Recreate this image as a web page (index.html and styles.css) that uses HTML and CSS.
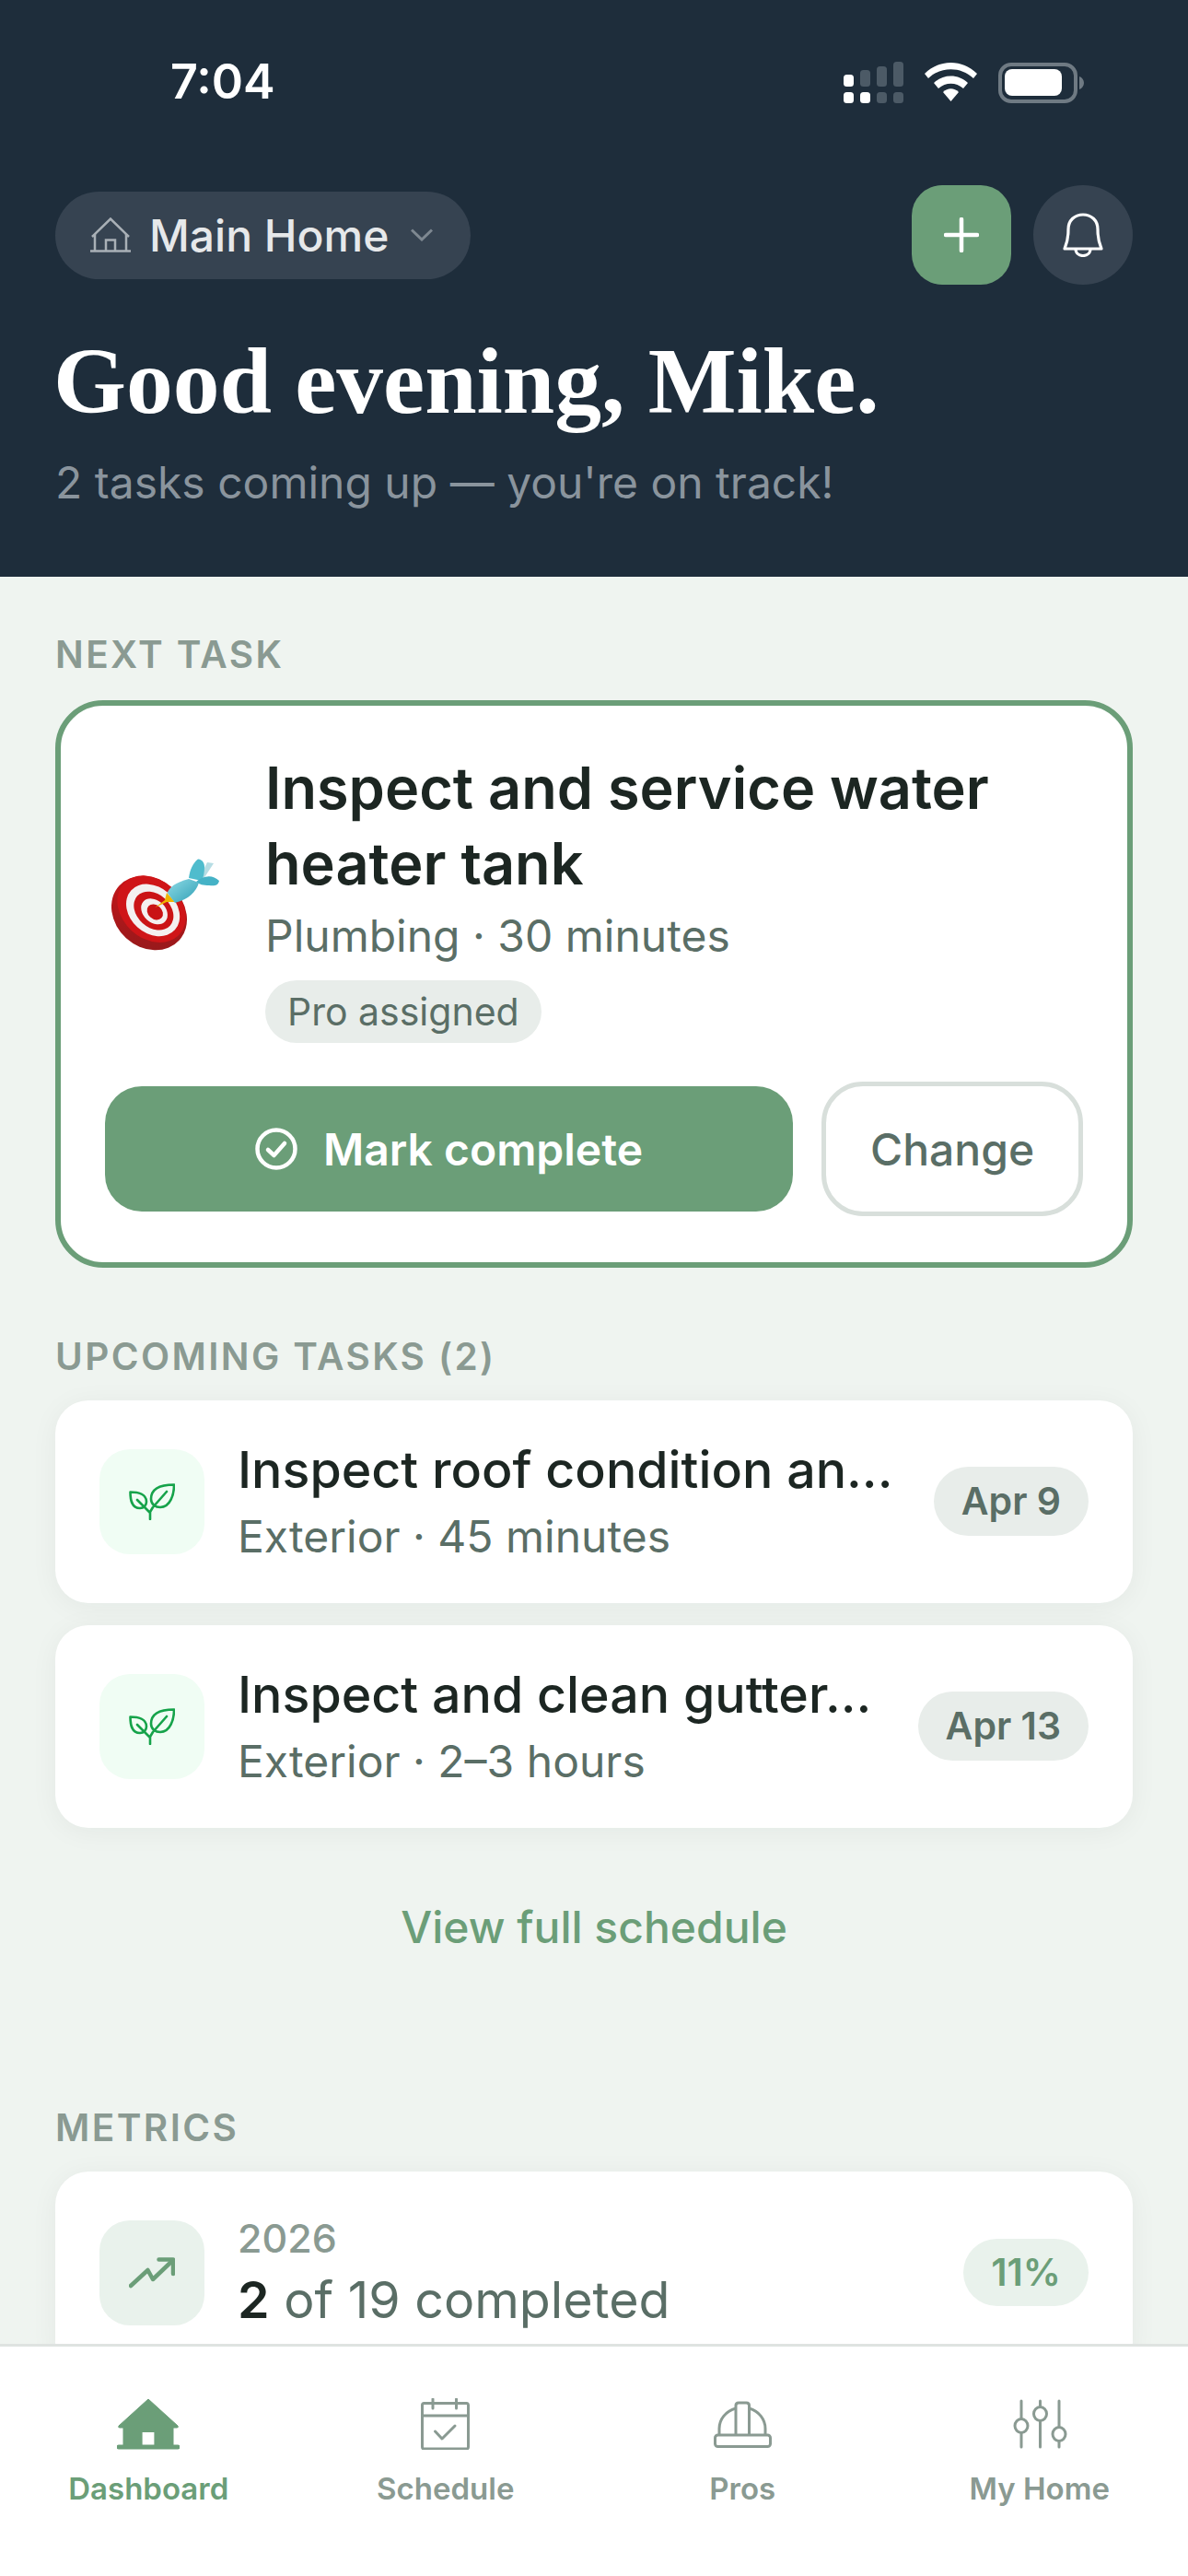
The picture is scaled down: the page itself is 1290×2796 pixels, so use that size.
FILE: index.html
```html
<!DOCTYPE html>
<html lang="en">
<head>
    <meta charset="UTF-8">
    <meta name="viewport" content="width=device-width, initial-scale=1.0">
    <title>Dashboard</title>
    <link rel="stylesheet" href="styles.css">
</head>
<body>
    <header class="hero">
        <div class="status-bar">
            <span class="status-time">7:04</span>
            <svg class="status-icons" width="261" height="45" viewBox="0 0 261 45">
                <!-- signal -->
                <g fill="#4c5a66">
                    <rect x="18" y="9" width="11" height="18" rx="3.5"/>
                    <rect x="36" y="5" width="11" height="22" rx="3.5"/>
                    <rect x="54" y="0" width="11" height="27" rx="3.5"/>
                    <rect x="36" y="33" width="11" height="12" rx="3.5"/>
                    <rect x="54" y="33" width="11" height="12" rx="3.5"/>
                </g>
                <g fill="#fff">
                    <rect x="0" y="14" width="11" height="13" rx="3.5"/>
                    <rect x="0" y="33" width="11" height="12" rx="3.5"/>
                    <rect x="18" y="33" width="11" height="12" rx="3.5"/>
                    <!-- wifi -->
                    <path d="M88 13 C104 -3 129 -3 145 13 L141 18 C127 5 106 5 92 18 Z"/>
                    <path d="M98 23 C108 13 125 13 135 23 L130 29 C122 22 111 22 103 29 Z"/>
                    <path d="M108 33 C113 28 120 28 125 33 L116.5 43 Z"/>
                </g>
                <!-- battery -->
                <rect x="170" y="3" width="82" height="40" rx="12" fill="none" stroke="#6f7a83" stroke-width="4"/>
                <rect x="175" y="8" width="62" height="29" rx="8" fill="#fff"/>
                <path d="M256 16 C259 17 261 20 261 23 C261 26 259 29 256 30 Z" fill="#6f7a83"/>
            </svg>
        </div>

        <div class="hero-top">
            <div class="home-select">
                <svg width="44" height="38" viewBox="0 0 44 38" fill="none" stroke="#a9b0b6" stroke-width="2.5">
                    <path d="M2 21 L22 1.5 L42 21"/>
                    <path d="M5 18 V36.5 M39 18 V36.5 M0 36.5 H44"/>
                    <path d="M17 36.5 V24.5 H27 V36.5"/>
                </svg>
                <span class="home-name">Main Home</span>
                <svg width="24" height="14" viewBox="0 0 24 14" fill="none" stroke="#7e8891" stroke-width="3">
                    <path d="M1 1.5 L12 12 L23 1.5"/>
                </svg>
            </div>
            <div class="hero-actions">
                <button class="add-btn">
                    <svg width="38" height="38" viewBox="0 0 38 38" stroke="#fff" stroke-width="4.5" stroke-linecap="round">
                        <path d="M19 2 V36 M2 19 H36"/>
                    </svg>
                </button>
                <button class="bell-btn">
                    <svg width="44" height="48" viewBox="0 0 44 48" fill="none" stroke="#fff" stroke-width="3.2" stroke-linejoin="round">
                        <path d="M2 39 C2 37 6 33 6 18 C6 8 13 2 22 2 C31 2 38 8 38 18 C38 33 42 37 42 39 Z"/>
                        <path d="M14 39 C14 44 18 46.5 22 46.5 C26 46.5 30 44 30 39"/>
                    </svg>
                </button>
            </div>
        </div>

        <h1 class="greeting">Good evening, Mike.</h1>
        <p class="hero-sub">2 tasks coming up — you're on track!</p>
    </header>

    <main class="content">
        <h2 class="section-label">NEXT TASK</h2>
        <section class="next-card">
            <div class="next-top">
                <!-- dart emoji -->
                <svg class="dart" width="118" height="100" viewBox="0 0 118 100">
                    <defs>
                        <linearGradient id="dartBody" x1="0" y1="0" x2="1" y2="1">
                            <stop offset="0" stop-color="#8fdbe6"/>
                            <stop offset="1" stop-color="#2f9fb5"/>
                        </linearGradient>
                        <linearGradient id="boardSide" x1="0" y1="0" x2="1" y2="1">
                            <stop offset="0" stop-color="#d01518"/>
                            <stop offset="1" stop-color="#8f1a1c"/>
                        </linearGradient>
                    </defs>
                    <g transform="rotate(42 41 59)">
                        <ellipse cx="41" cy="59" rx="44" ry="37" fill="url(#boardSide)"/>
                        <g transform="translate(-1 -5)">
                            <ellipse cx="41" cy="59" rx="41" ry="32" fill="#cf1518"/>
                            <ellipse cx="43" cy="59" rx="32" ry="25" fill="#f4f0f0"/>
                            <ellipse cx="44" cy="59" rx="24" ry="18" fill="#cb1416"/>
                            <ellipse cx="45" cy="59" rx="16" ry="12" fill="#f4f0f0"/>
                            <ellipse cx="46" cy="59" rx="9.5" ry="7.5" fill="#c91315"/>
                        </g>
                    </g>
                    <path d="M104 4 L111 5 L100 22 L96 20 Z" fill="#b6dde4"/>
                    <path d="M84 21 C85 12 89 4 94 0.5 C99 1 101 5 101 9 C101 15 100 20 98 24 Z" fill="#4fbccd"/>
                    <path d="M92 25 C100 18 110 17 117 24 C116 29 112 30 106 29 C100 29 95 28 92 25 Z" fill="#45b2c6"/>
                    <path d="M47.3 53 L58 45 L60 37 L69 47 L60 47 Z" fill="#f0b400"/>
                    <path d="M60.7 37 C63 31 69 26 84 22 L95 26 C92 36 84 44 69 48 Z" fill="url(#dartBody)"/>
                </svg>
                <div class="next-text">
                    <div class="next-title">Inspect and service water heater tank</div>
                    <div class="next-meta">Plumbing · 30 minutes</div>
                    <span class="pro-pill">Pro assigned</span>
                </div>
            </div>
            <div class="next-actions">
                <button class="complete-btn">
                    <svg width="46" height="46" viewBox="0 0 46 46" fill="none" stroke="#fff" stroke-width="4.5" stroke-linecap="round" stroke-linejoin="round">
                        <circle cx="23" cy="23" r="20.5"/>
                        <path d="M14 24 L20.5 30 L32 17"/>
                    </svg>
                    Mark complete
                </button>
                <button class="change-btn">Change</button>
            </div>
        </section>

        <h2 class="section-label upcoming-label">UPCOMING TASKS (2)</h2>
        <div class="task-list">
            <div class="task-card">
                <div class="task-icon">
                    <svg width="50" height="40" viewBox="0 0 50 40" fill="none" stroke="#16a34a" stroke-width="2.6" stroke-linecap="round" stroke-linejoin="round">
                        <path d="M49 1.5 C38 1.5 24 4 24 17 C24 23 29 26 34 26 C45 26 49 12 49 1.5 Z"/>
                        <path d="M1.5 9.5 C1.5 18 3 27 12 27 C16 27 19 24 19 20 C19 12 10 9.5 1.5 9.5 Z"/>
                        <path d="M41 9 L26 26 L23 31 V39 M9 18 L23 32"/>
                    </svg>
                </div>
                <div class="task-text">
                    <div class="task-title">Inspect roof condition an...</div>
                    <div class="task-meta">Exterior · 45 minutes</div>
                </div>
                <span class="date-badge">Apr 9</span>
            </div>
            <div class="task-card">
                <div class="task-icon">
                    <svg width="50" height="40" viewBox="0 0 50 40" fill="none" stroke="#16a34a" stroke-width="2.6" stroke-linecap="round" stroke-linejoin="round">
                        <path d="M49 1.5 C38 1.5 24 4 24 17 C24 23 29 26 34 26 C45 26 49 12 49 1.5 Z"/>
                        <path d="M1.5 9.5 C1.5 18 3 27 12 27 C16 27 19 24 19 20 C19 12 10 9.5 1.5 9.5 Z"/>
                        <path d="M41 9 L26 26 L23 31 V39 M9 18 L23 32"/>
                    </svg>
                </div>
                <div class="task-text">
                    <div class="task-title">Inspect and clean gutter...</div>
                    <div class="task-meta">Exterior · 2–3 hours</div>
                </div>
                <span class="date-badge">Apr 13</span>
            </div>
        </div>

        <a class="schedule-link">View full schedule</a>

        <h2 class="section-label metrics-label">METRICS</h2>
        <div class="task-card metric-card">
            <div class="task-icon metric-icon">
                <svg width="50" height="34" viewBox="0 0 50 34" fill="none" stroke="#6b9e78" stroke-width="4.5" stroke-linecap="round" stroke-linejoin="round">
                    <path d="M2 31 L20.5 14 L26 24 L47.5 3.5"/>
                    <path d="M32.5 2.5 H48 V18"/>
                </svg>
            </div>
            <div class="task-text metric-text">
                <div class="metric-year">2026</div>
                <div class="metric-value"><b>2</b> of 19 completed</div>
            </div>
            <span class="date-badge pct-badge">11%</span>
        </div>
    </main>

    <nav class="tabbar">
        <a class="tab active">
            <span class="tab-icon">
                <svg width="68" height="56" viewBox="0 0 68 56">
                    <path d="M34 1 L66 30 Q67 32 65 32 H61 V51 H7 V32 H3 Q1 32 2 30 Z" fill="#6b9e78" stroke="#6b9e78" stroke-width="1" stroke-linejoin="round"/>
                    <rect x="27.6" y="37" width="12.8" height="15" fill="#fff"/>
                    <path d="M2 53 H66" stroke="#6b9e78" stroke-width="5" stroke-linecap="round"/>
                </svg>
            </span>
            Dashboard
        </a>
        <a class="tab">
            <span class="tab-icon">
                <svg width="54" height="56" viewBox="0 0 54 56" fill="none" stroke="#8a9a92" stroke-width="3" stroke-linecap="round" stroke-linejoin="round">
                    <rect x="1.5" y="5.5" width="50" height="49.5" rx="2"/>
                    <path d="M1.5 19 H51.5 M13 1 V11 M38.5 1 V11"/>
                    <path d="M15.5 36 L23 44 L37 30"/>
                </svg>
            </span>
            Schedule
        </a>
        <a class="tab">
            <span class="tab-icon">
                <svg width="63" height="51" viewBox="0 0 63 51" fill="none" stroke="#8a9a92" stroke-width="3" stroke-linejoin="round">
                    <rect x="1.5" y="37" width="60" height="12.5" rx="3"/>
                    <path d="M6 37 V30 C6 20 13 11 24 8 M38.5 8 C49 11 56 20 56 30 V37"/>
                    <path d="M24 37 V5 Q24 2 27 2 H35.5 Q38.5 2 38.5 5 V37"/>
                </svg>
            </span>
            Pros
        </a>
        <a class="tab">
            <span class="tab-icon">
                <svg width="60" height="54" viewBox="0 0 60 54" fill="#fff" stroke="#8a9a92" stroke-width="3">
                    <path d="M10 2 V52 M30.5 2 V52 M51 2 V52" stroke-linecap="round"/>
                    <ellipse cx="10" cy="29" rx="7" ry="7.5"/>
                    <ellipse cx="30.5" cy="16" rx="7" ry="7.5"/>
                    <ellipse cx="51" cy="38" rx="7" ry="7.5"/>
                </svg>
            </span>
            My Home
        </a>
    </nav>
</body>
</html>
```

FILE: styles.css
```css
:root {
    --navy: #1e2d3b;
    --navy-soft: #364351;
    --green: #6b9e78;
    --green-pale: #e9f2ec;
    --page: #eff4f0;
    --ink: #1c2622;
    --muted: #5a6e66;
    --faint: #8a9a92;
    --chip: #e8edea;
}

* {
    box-sizing: border-box;
}

body {
    font-family: Inter, "Noto Sans", sans-serif;
    background-color: var(--page);
    margin: 0;
    width: 1290px;
    height: 2796px;
    display: flex;
    flex-direction: column;
    overflow: hidden;
}

button {
    font-family: inherit;
    border: none;
    cursor: pointer;
    padding: 0;
}

/* header */
.hero {
    background-color: var(--navy);
    height: 626px;
    padding: 62px 60px 0;
    flex-shrink: 0;
}

.status-bar {
    display: flex;
    justify-content: space-between;
    align-items: center;
    height: 54px;
    padding: 0 53px 0 125px;
}

.status-time {
    color: #fff;
    font-size: 52px;
    font-weight: 600;
    line-height: 54px;
}

.status-icons {
    display: block;
}

.hero-top {
    display: flex;
    justify-content: space-between;
    align-items: center;
    margin-top: 85px;
}

.home-select {
    display: flex;
    align-items: center;
    width: 451px;
    height: 95px;
    padding-left: 38px;
    border-radius: 48px;
    background-color: var(--navy-soft);
}

.home-name {
    color: #e6e8ea;
    font-size: 48px;
    font-weight: 500;
    margin: 0 24px 0 20px;
}

.hero-actions {
    display: flex;
    gap: 24px;
}

.add-btn,
.bell-btn {
    width: 108px;
    height: 108px;
    display: flex;
    align-items: center;
    justify-content: center;
}

.add-btn {
    background-color: var(--green);
    border-radius: 33px;
}

.bell-btn {
    background-color: var(--navy-soft);
    border-radius: 50%;
}

.greeting {
    color: #fff;
    font-family: "Liberation Serif", serif;
    font-size: 101.5px;
    font-weight: 700;
    line-height: 120px;
    margin: 45px 0 0 -2px;
}

.hero-sub {
    color: #8a949d;
    font-size: 48px;
    line-height: 60px;
    margin: 20px 0 0;
}

/* main */
.content {
    flex: 1;
    min-height: 0;
    overflow: hidden;
    padding: 60px 60px 0;
}

.section-label {
    color: var(--faint);
    font-size: 40.5px;
    font-weight: 600;
    letter-spacing: 2.4px;
    line-height: 50px;
    margin: 0 0 24px;
}

.next-card {
    background-color: #fff;
    border: 6px solid var(--green);
    border-radius: 52px;
    padding: 47.5px 48px 49.5px;
}

.next-top {
    display: flex;
    align-items: center;
}

.dart {
    flex-shrink: 0;
    margin: 18px 49px 0 7px;
}

.next-title {
    color: var(--ink);
    font-size: 63px;
    font-weight: 600;
    line-height: 82px;
}

.next-meta {
    color: var(--muted);
    font-size: 48px;
    line-height: 60px;
    margin-top: 8px;
}

.pro-pill {
    display: inline-block;
    background-color: var(--chip);
    color: var(--muted);
    font-size: 41px;
    line-height: 68px;
    padding: 0 24px;
    border-radius: 34px;
    margin-top: 18px;
}

.next-actions {
    display: flex;
    align-items: center;
    gap: 31px;
    margin-top: 42.5px;
}

.complete-btn {
    flex: 1;
    height: 136px;
    display: flex;
    align-items: center;
    justify-content: center;
    gap: 28px;
    background-color: var(--green);
    color: #fff;
    font-size: 48px;
    font-weight: 600;
    border-radius: 40px;
}

.change-btn {
    width: 284px;
    height: 146px;
    background-color: #fff;
    border: 5px solid #d8dfdb;
    border-radius: 45px;
    color: var(--muted);
    font-size: 48px;
    font-weight: 500;
}

.upcoming-label {
    margin-top: 72px;
    margin-bottom: 22px;
}

.task-list {
    display: flex;
    flex-direction: column;
    gap: 24px;
}

.task-card {
    display: flex;
    align-items: center;
    height: 220px;
    padding: 0 48px;
    gap: 36px;
    background-color: #fff;
    border-radius: 36px;
    box-shadow: 0 4px 30px rgba(20, 40, 30, 0.05);
}

.task-icon {
    width: 114px;
    height: 114px;
    flex-shrink: 0;
    display: flex;
    align-items: center;
    justify-content: center;
    background-color: #f0fdf4;
    border-radius: 33px;
}

.task-text {
    flex: 1;
    min-width: 0;
}

.task-title {
    color: var(--ink);
    font-size: 55.5px;
    font-weight: 500;
    line-height: 70px;
    white-space: nowrap;
}

.task-meta {
    color: var(--muted);
    font-size: 48px;
    line-height: 62px;
    margin-top: 7px;
}

.date-badge {
    flex-shrink: 0;
    background-color: var(--chip);
    color: var(--muted);
    font-size: 41px;
    font-weight: 600;
    line-height: 75px;
    padding: 0 30px;
    border-radius: 38px;
}

.schedule-link {
    display: block;
    text-align: center;
    color: var(--green);
    font-size: 48px;
    font-weight: 500;
    line-height: 68px;
    margin-top: 74px;
}

.metrics-label {
    margin-top: 159px;
    margin-bottom: 22px;
}

.metric-icon {
    background-color: var(--green-pale);
}

.metric-text {
    padding-bottom: 2px;
}

.metric-year {
    color: var(--faint);
    font-size: 43px;
    font-weight: 500;
    line-height: 56px;
}

.metric-value {
    color: var(--muted);
    font-size: 55.5px;
    line-height: 70px;
    margin-top: 4px;
    white-space: nowrap;
}

.metric-value b {
    color: var(--ink);
    font-weight: 600;
}

.pct-badge {
    background-color: var(--green-pale);
    color: var(--green);
    line-height: 73px;
}

/* bottom tabs */
.tabbar {
    display: grid;
    grid-template-columns: repeat(4, 1fr);
    height: 252px;
    flex-shrink: 0;
    padding-top: 54px;
    background-color: #fff;
    border-top: 3px solid #dfe3e1;
}

.tab {
    display: flex;
    flex-direction: column;
    align-items: center;
    color: var(--faint);
    font-size: 33px;
    font-weight: 600;
    line-height: 44px;
}

.tab.active {
    color: var(--green);
}

.tab-icon {
    height: 60px;
    display: flex;
    align-items: center;
    margin-bottom: 18px;
}
```
